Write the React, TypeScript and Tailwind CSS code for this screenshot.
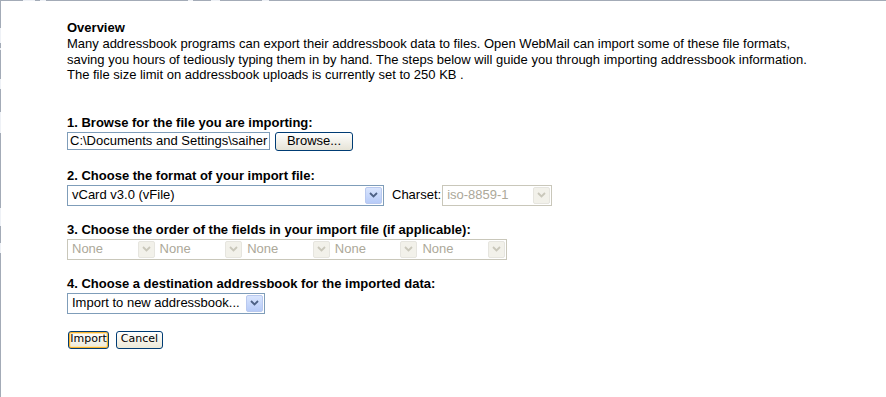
import React from "react";

const font = { fontFamily: '"Liberation Sans", Arial, sans-serif' };

function Arrow({ disabled }: { disabled?: boolean }) {
  return (
    <div
      className={
        "flex h-full w-[17px] shrink-0 items-center justify-center rounded-[2px] border " +
        (disabled
          ? "border-[#e6e5df] bg-[#f2f1ea]"
          : "border-[#b9c9ef] bg-gradient-to-b from-[#d9e5fd] to-[#b7cbf8]")
      }
    >
      <svg width="9" height="6" viewBox="0 0 9 6">
        <path
          d="M1 1 L4.5 4.5 L8 1"
          fill="none"
          stroke={disabled ? "#c9c7ba" : "#4d6185"}
          strokeWidth="1.8"
        />
      </svg>
    </div>
  );
}

function Select({
  text,
  w,
  h,
  disabled,
  cls = "",
}: {
  text: string;
  w: string;
  h: string;
  disabled?: boolean;
  cls?: string;
}) {
  return (
    <div
      className={
        "flex items-stretch border p-[1px] " +
        (disabled ? "border-[#c9c7ba] text-[#aca899]" : "border-[#7f9db9] text-black") +
        " " +
        w +
        " " +
        h +
        " " +
        cls
      }
    >
      <div className="flex flex-1 items-center overflow-hidden whitespace-nowrap pl-[3px] text-[13px]">
        {text}
      </div>
      <Arrow disabled={disabled} />
    </div>
  );
}

export default function App() {
  return (
    <div className="relative h-[397px] w-[886px] overflow-hidden bg-white text-black" style={font}>
      <div className="absolute inset-x-0 top-0 h-px bg-[#a3abb7]" />
      <div className="absolute inset-y-0 left-0 w-px bg-[#a3abb7]" />
      <div className="absolute left-[23px] top-0 h-px w-[12px] bg-[#eef1f6]" />
      <div className="absolute left-[40px] top-0 h-px w-[6px] bg-[#eef1f6]" />
      <div className="absolute left-[188px] top-0 h-px w-[5px] bg-[#eef1f6]" />
      <div className="absolute left-[211px] top-0 h-px w-[9px] bg-[#eef1f6]" />
      <div className="absolute left-[262px] top-0 h-px w-[7px] bg-[#eef1f6]" />
      <div className="absolute left-0 top-[28px] h-[15px] w-px bg-[#eef1f6]" />
      <div className="absolute left-0 top-[48px] h-[2px] w-px bg-[#eef1f6]" />
      <div className="absolute left-0 top-[79px] h-[10px] w-px bg-[#eef1f6]" />
      <div className="absolute left-0 top-[112px] h-[21px] w-px bg-[#eef1f6]" />
      <div className="absolute left-0 top-[208px] h-[18px] w-px bg-[#eef1f6]" />
      <div className="absolute left-0 top-[243px] h-[10px] w-px bg-[#eef1f6]" />

      <div className="flex flex-col pl-[67px] pt-[20px] text-[13px]">
        <div className="text-[13px] font-bold leading-[16px]">Overview</div>
        <div className="leading-[15.5px]">
          Many addressbook programs can export their addressbook data to files. Open WebMail can import some of these file formats,
          <br />
          saving you hours of tediously typing them in by hand. The steps below will guide you through importing addressbook information.
          <br />
          The file size limit on addressbook uploads is currently set to 250 KB .
        </div>

        <div className="mt-[32px] font-bold leading-[16px]">1. Browse for the file you are importing:</div>
        <div className="mt-px flex items-center gap-[5px]">
          <div className="flex h-[18px] w-[203px] items-center overflow-hidden whitespace-nowrap border border-[#7f9db9] pl-[2px]">
            C:\Documents and Settings\saiher
          </div>
          <div className="flex h-[19px] w-[78px] items-center justify-center rounded-[3px] border border-[#003c74] bg-gradient-to-b from-white to-[#e6e3d6] text-[13px]">
            Browse...
          </div>
        </div>

        <div className="mt-[17px] font-bold leading-[16px]">2. Choose the format of your import file:</div>
        <div className="mt-px flex items-center">
          <Select text="vCard v3.0 (vFile)" w="w-[317px]" h="h-[21px]" />
          <span className="ml-[8px] mr-px">Charset:</span>
          <Select text="iso-8859-1" w="w-[110px]" h="h-[21px]" disabled />
        </div>

        <div className="mt-[16px] font-bold leading-[16px]">3. Choose the order of the fields in your import file (if applicable):</div>
        <div className="mt-px flex w-[440px] gap-[2px] border border-[#c9c7ba] p-px">
          {[0, 1, 2, 3, 4].map((i) => (
            <div key={i} className="flex h-[17px] w-[86px] items-stretch text-[#aca899]">
              <div className="flex flex-1 items-center pl-[3px] text-[13px]">None</div>
              <Arrow disabled />
            </div>
          ))}
        </div>

        <div className="mt-[16px] font-bold leading-[16px]">4. Choose a destination addressbook for the imported data:</div>
        <div className="mt-px">
          <Select text="Import to new addressbook..." w="w-[198px]" h="h-[21px]" />
        </div>

        <div className="mt-[17px] flex gap-[7px] pl-px text-[12px]" style={{ fontFamily: 'Tahoma, "DejaVu Sans", sans-serif' }}>
          <div className="flex h-[18px] w-[41px] items-center justify-center rounded-[3px] border border-[#003c74] bg-gradient-to-b from-white to-[#ece9d8] shadow-[inset_0_0_0_1px_#f8b330,inset_0_0_0_2px_#fce6b0] text-[11px]">
            Import
          </div>
          <div className="flex h-[18px] w-[47px] items-center justify-center rounded-[3px] border border-[#003c74] bg-gradient-to-b from-white to-[#ece9d8] text-[11px]">
            Cancel
          </div>
        </div>
      </div>
    </div>
  );
}
